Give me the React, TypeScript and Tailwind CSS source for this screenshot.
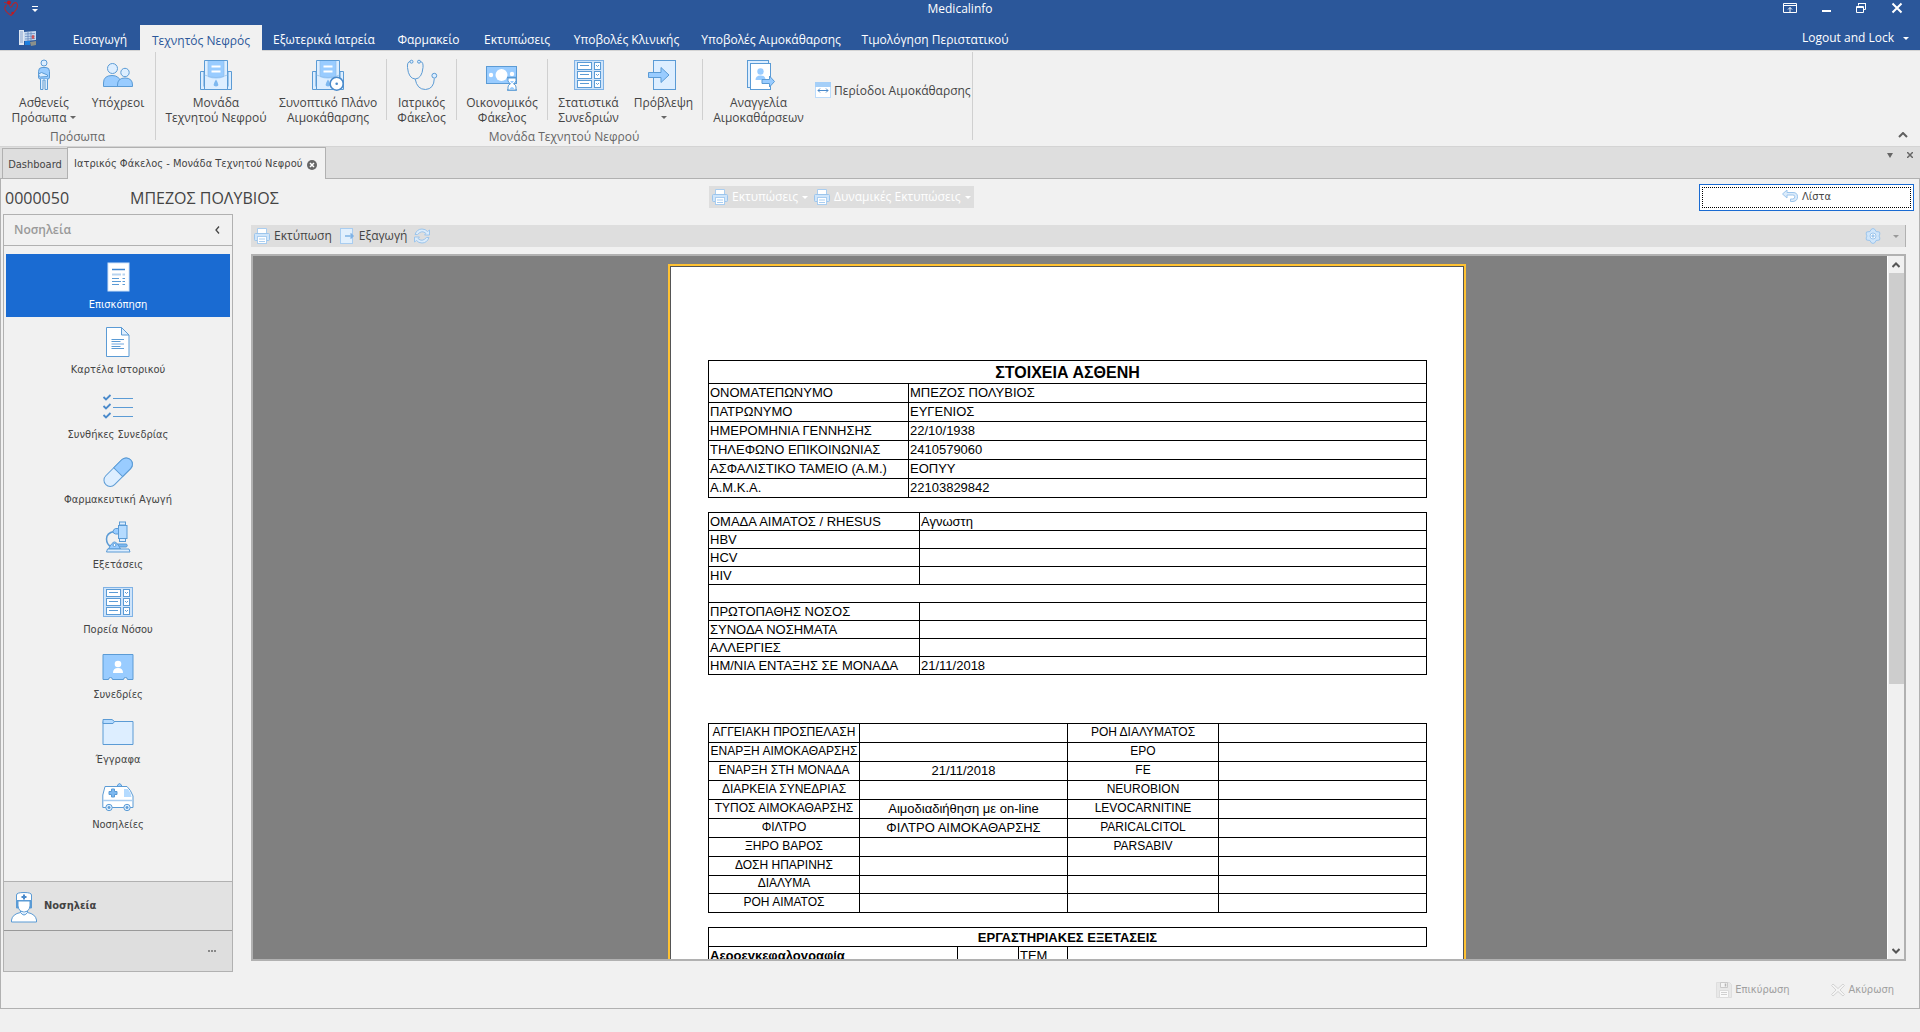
import type { ReactNode } from "react";

const LINE = "#5b9bd5";
const MID = "#99ccff";
const PALE = "#ddeeff";

type IconProps = { className?: string };

const Svg = ({ children, size = 32, className = "" }: { children: ReactNode; size?: number; className?: string }) => (
  <svg
    width={size}
    height={size}
    viewBox={`0 0 ${size} ${size}`}
    fill="none"
    stroke={LINE}
    strokeWidth="1"
    className={`shrink-0 ${className}`}
    aria-hidden="true"
  >
    {children}
  </svg>
);

const PatientIcon = () => (
  <Svg>
    <circle cx="16" cy="4" r="3" fill={PALE} />
    <path d="M10.500 18v-5.500q0-4 3.500-4h4q3.500 0 3.500 4V18q0 2-1.500 2h-8q-1.500 0-1.500-2z" fill={MID} />
    <path d="M12.500 20v10.500h2.500V21h2v9.500h2.500V20" fill={PALE} />
    <path d="M10.500 15l3-1.500 6 2.500v1.500l-7 .5q-2-1-2-3z" fill={PALE} />
  </Svg>
);

const PeopleIcon = () => (
  <Svg>
    <circle cx="10.500" cy="9.500" r="5" fill={PALE} />
    <path d="M1.500 27.500V24q0-7.500 8.500-7.500 7 0 8.500 6v5z" fill={MID} />
    <circle cx="23" cy="13.500" r="4.200" fill={PALE} />
    <path d="M15.500 27.500V26q0-7 7.500-7t7.500 7v1.500z" fill={MID} />
  </Svg>
);

const MachineBase = () => (
  <>
    <path d="M.5 12.500H4v15h24v-15h3.500v18H.5z" fill={PALE} />
    <path d="M4.500 30.500V1.500h23v29z" fill={PALE} />
    <path d="M8 2h16v16q-8 3-16 0z" fill={MID} stroke="none" />
    <path d="M4.500 16q11.500 5 23 0M8 2v14.500M24 2v14.500" strokeWidth=".7" stroke="#8fbbe6" />
    <path d="M11.500 7.500h9M11.500 12.500h9" stroke="#fff" strokeWidth="2" />
    <path d="M16 20.500q4.500 6.500 0 7-4.500-.5 0-7z" fill="#7db8f0" stroke="none" />
  </>
);

const MachineIcon = () => (
  <Svg>
    <MachineBase />
  </Svg>
);

const MachinePlanIcon = () => (
  <Svg>
    <MachineBase />
    <circle cx="24.700" cy="24.700" r="6.500" fill="#fff" stroke="#4a8acb" strokeWidth="1.500" />
    <circle cx="24.700" cy="24.700" r="1.300" fill="#4a8acb" stroke="none" />
  </Svg>
);

const StethoscopeIcon = () => (
  <Svg>
    <circle cx="5.500" cy="2.700" r="1.500" fill={PALE} />
    <circle cx="13" cy="2.700" r="1.500" fill={PALE} />
    <path d="M4 2.500Q1 3 1.500 8.500 2.500 19.500 9.200 20 16 19.500 17 8.500 17.500 3 14.500 2.500" />
    <path d="M9.200 20Q11 30.500 19.500 30.500 28 30 28.300 19.500" />
    <circle cx="28.300" cy="16.700" r="2.400" fill={PALE} />
  </Svg>
);

const MoneyIcon = () => (
  <Svg>
    <rect x=".5" y="7.500" width="30" height="17" fill={MID} />
    <circle cx="15.500" cy="16" r="6" fill="#fff" stroke="none" />
    <circle cx="5" cy="16" r="2.200" fill="#fff" stroke="none" />
    <circle cx="26" cy="15" r="2.200" fill="#fff" stroke="none" />
    <path d="M21 18.500h10M21 31h10" strokeWidth="1.500" />
    <path d="M22 19v2.500q0 2 2.500 3.200-2.500 1.300-2.500 3.300v3h8v-3q0-2-2.500-3.300 2.500-1.200 2.500-3.200V19z" fill="#fff" />
    <path d="M24 22h4l-2 2.500zM23.500 30q2.500-4 5 0z" fill={MID} stroke="none" />
  </Svg>
);

const FormListIcon = () => (
  <Svg>
    <rect x="1.500" y="1.500" width="29" height="29" fill="#cfe4fa" stroke="#7fb2e5" />
    {[3, 12, 21].map((y) => (
      <g key={y}>
        <rect x="4.500" y={y + 0.5} width="14" height="7" fill="#fff" />
        <path d={`M7 ${y + 3.5}h9`} />
        <rect x="21.500" y={y + 0.5} width="6" height="7" fill="#fff" />
        <path d={`M23 ${y + 3}l1.500 1.500 1.500-1.500`} />
      </g>
    ))}
  </Svg>
);

const ForecastIcon = () => (
  <Svg>
    <rect x="5.500" y="1.500" width="22" height="29" fill={PALE} />
    <path d="M.5 13.500h12.500V8.500l8 7.500-8 7.500V18.500H.5z" fill={MID} />
  </Svg>
);

const AnnounceIcon = () => (
  <Svg>
    <rect x="4.500" y="1.500" width="21" height="27" fill={PALE} />
    <rect x="7.500" y="4.500" width="20" height="26" fill="#fff" />
    <circle cx="17.500" cy="12.500" r="3.200" fill={MID} stroke="none" />
    <path d="M12.500 21q0-4.500 5-4.500t5 4.500z" fill={MID} stroke="none" />
    <path d="M19 20.500h7.500V17l5 5.500-5 5.500v-3.500H19z" fill={MID} />
  </Svg>
);

const PeriodIcon = () => (
  <Svg size={16}>
    <rect x=".5" y=".5" width="15" height="15" fill="#fff" stroke="#bcdcfb" />
    <path d="M0 0h16v5H0z" fill="#a5cff8" stroke="none" />
    <path d="M3 8.500h10M5 6.500l-2 2 2 2M11 6.500l2 2-2 2" stroke="#4a8acb" />
  </Svg>
);

const PrinterIcon = () => (
  <Svg size={16}>
    <path d="M3.500 5V.5h9V5" fill="#fff" stroke="#a9cdf0" />
    <rect x=".5" y="5.500" width="15" height="7" rx="1" fill="#cfe5fa" stroke="#9cc5ec" />
    <rect x="3.500" y="8.500" width="9" height="7" fill="#fff" stroke="#a9cdf0" />
    <path d="M5 11h6M5 13.500h6" stroke="#a9cdf0" />
  </Svg>
);

const ExportIcon = () => (
  <Svg size={16}>
    <rect x="1.500" y=".5" width="12" height="15" fill="#e2f0fd" stroke="#a9cdf0" />
    <path d="M6 8h8M11.500 5.500L14 8l-2.500 2.500" stroke="#7fb2e5" strokeWidth="1.500" />
  </Svg>
);

const RefreshIcon = () => (
  <Svg size={16}>
    <path d="M1 6.500Q3 1 8 1q3.500 0 5.500 2.500L15.500 2v5h-5l1.500-1.500Q8 1.500 3.500 6.500z" fill="#dcecfb" stroke="#9cc5ec" />
    <path d="M15 9.500Q13 15 8 15q-3.500 0-5.500-2.500L.5 14V9h5L4 10.500q4 4 8.500-1z" fill="#dcecfb" stroke="#9cc5ec" />
  </Svg>
);

const GearIcon = () => (
  <Svg size={16}>
    <path d="M6 1.500q2-2 4 0l1 2 3.500.5q1 2-.5 4 1.500 2 .5 4l-3.500.5-1 2q-2 2-4 0l-1-2-3.500-.5q-1-2 .5-4-1.500-2-.5-4L5 3.500z" fill="#cfe5fa" stroke="#9cc5ec" />
    <circle cx="8" cy="8" r="3" fill="#fff" stroke="#9cc5ec" />
    <circle cx="8" cy="8" r="1.200" fill="#a9cdf0" stroke="#9cc5ec" />
  </Svg>
);

const BackIcon = () => (
  <Svg size={16}>
    <path d="M.5 5L5 1v2.500h6q4.500 0 4.500 4.300T11 12.500H8.500V10h2.300q2-.2 2-2.200T10.800 6H5v3z" fill="#dcecfb" stroke="#9cc5ec" />
  </Svg>
);

const SaveIcon = () => (
  <Svg size={16}>
    <path d="M.5.500h13l2 2v13H.5z" fill="#e8e8e8" stroke="#dedede" />
    <path d="M4.500.500h7v5h-7z" fill="#f4f4f4" stroke="#c9c9c9" />
    <path d="M9.500 1.500v3" stroke="#b5b5b5" strokeWidth="1.500" />
    <path d="M3.500 8.500h9v7h-9z" fill="#fafafa" stroke="#dcdcdc" />
    <path d="M5 10.500h6M5 12.500h6" stroke="#d0d0d0" />
  </Svg>
);

const CancelIcon = () => (
  <Svg size={16}>
    <path d="M3 2l5 4.500L13 2l1.500 1.500L10 8l4.500 4.500L13 14 8 9.500 3 14l-1.500-1.500L6 8 1.500 3.500z" fill="#f4f4f4" stroke="#d4d4d4" />
  </Svg>
);

const ReportIcon = () => (
  <Svg>
    <rect x="6" y="2" width="21" height="28" fill="#fff" stroke="#cfe4fa" />
    <path d="M10 8.500h13" stroke="#3f86d0" strokeWidth="1.500" />
    <path d="M10 13.500h9M20.500 13.500h2.500" stroke="#b7d3ef" strokeWidth="2" />
    <path d="M10 17.500h7M20.500 17.500h2.500M10 20.500h9M20.500 20.500h2.500M10 23.500h7M20.500 23.500h2.500" />
  </Svg>
);

const HistoryCardIcon = () => (
  <Svg>
    <path d="M4.500 1.500h15l7.500 7.500v21.500H4.500z" fill="#fff" />
    <path d="M19.500 1.500V9H27z" fill={PALE} />
    <path d="M9.500 13.500H22M9.500 15.500h9M9.500 20.500h9M9.500 22.500H22" />
    <path d="M9.500 18H22" stroke="#b7d3ef" strokeWidth="2" />
  </Svg>
);

const ChecklistIcon = () => (
  <Svg>
    {[7, 16, 25].map((y) => (
      <g key={y}>
        <path d={`M1.500 ${y - 1}l2.500 2.500 4.500-4.500`} stroke="#4a8acb" strokeWidth="1.800" />
        <path d={`M11 ${y + 0.5}h20`} />
      </g>
    ))}
  </Svg>
);

const PillIcon = () => (
  <Svg>
    <g transform="rotate(45 16 16)">
      <rect x="10" y="-1.500" width="12.500" height="35" rx="6.200" fill={PALE} />
      <path d="M10 16V4.700a6.200 6.200 0 0 1 12.500 0V16z" fill={MID} />
    </g>
  </Svg>
);

const MicroscopeIcon = () => (
  <Svg>
    <path d="M12 10.500Q4.500 12 4.500 18q0 5 4.500 8" strokeWidth="1.500" />
    <rect x="17.500" y="1" width="6" height="3" fill={PALE} />
    <rect x="17.500" y="17.500" width="6" height="3" fill={PALE} />
    <rect x="16.500" y="4.500" width="8.500" height="13" fill="#b5dbff" />
    <path d="M16.500 7.500h-3q-2.500 1-2.500 3 0 2 2.500 2.500h3z" fill={MID} />
    <path d="M14 23h10.500q1.500 1.500 0 3H12z" fill="#7db8f0" />
    <path d="M6.500 28q3.500-7 6-7t6 7z" fill={MID} />
    <circle cx="12.500" cy="24" r="1.500" fill="#fff" />
    <path d="M4.500 31l1-3h21.500l1 3z" fill={PALE} />
  </Svg>
);

const SessionIcon = () => (
  <Svg>
    <path d="M1 3.500h30v25h-5.500a2 2 0 0 0-4 0h-11a2 2 0 0 0-4 0H1z" fill={MID} />
    <circle cx="16" cy="13" r="3.300" fill="#fff" stroke="none" />
    <path d="M11 22q0-5 5-5t5 5z" fill="#fff" stroke="none" />
  </Svg>
);

const FolderIcon = () => (
  <Svg>
    <path d="M1 28.500V5.500h30v23z" fill={PALE} />
    <path d="M1 7V3.500h9L12.500 5.500 11 7.500H1z" fill="#b5dbff" />
  </Svg>
);

const AmbulanceIcon = () => (
  <Svg>
    <path d="M15.500 5.500V4q2-3 4 0v1.500z" fill={MID} />
    <path d="M.8 26.500V14L3 5.500h22q3.500 3 6 9.500v11.500z" fill="#fff" />
    <path d="M22 8h4q3 3.500 3.500 8H22z" fill="#b5dbff" stroke="none" />
    <path d="M1 19.500h30" stroke="#a9cdf0" strokeWidth="1.500" />
    <path d="M9.500 8h3v2.500H15v3h-2.500V16h-3v-2.500H7v-3h2.500z" fill="#7db8f0" />
    <circle cx="7" cy="26.500" r="3.200" fill={PALE} />
    <circle cx="25" cy="26.500" r="3.200" fill={PALE} />
    <circle cx="7" cy="26.500" r="1" fill={LINE} />
    <circle cx="25" cy="26.500" r="1" fill={LINE} />
  </Svg>
);

const NurseIcon = () => (
  <Svg>
    <path d="M8.500 9h15v8h-15z" fill="#5b9bd5" />
    <path d="M10 10h12v5q-1 6-6 6.500-5-.5-6-6.500z" fill="#fff" />
    <path d="M8.500 9.500V4Q8.500 1.500 16 1.500T23.500 4v5.500z" fill="#fff" />
    <path d="M16 3.500v5M13.500 6h5" stroke="#4a8acb" strokeWidth="2" />
    <path d="M3.500 31v-2q1-6 9-7.500V20q3.500 2.500 7 0v1.500q8 1.500 9 7.500v2z" fill="#fff" />
    <path d="M12.500 21.500q3.500 5 7 0" fill={PALE} />
  </Svg>
);

const HeartLogo = () => (
  <svg width="16" height="16" viewBox="0 0 16 16" fill="none" stroke="#b3262e" aria-hidden="true">
    <path d="M3.500 5Q-1.500 9 8 15.500 17 7 13.500 3 11 1.500 8.500 7" strokeWidth="1.100" />
    <path d="M1 2.500Q5 2 8 8" strokeWidth=".9" />
    <circle cx="6" cy="2.500" r="2" fill="#c4161c" stroke="none" />
    <circle cx="9.500" cy="13" r="1.200" fill="#c4161c" stroke="none" />
  </svg>
);

const AppIcon = () => (
  <svg width="18" height="16" viewBox="0 0 18 16" aria-hidden="true">
    <path d="M0 0h5v15H0z" fill="#dfe7f2" />
    <path d="M1 2h3M1 4h3M1 6h3M1 8h3M1 10h3M1 12h3" stroke="#6f93c4" strokeWidth=".8" />
    <path d="M5 2l12-1v9L5 11z" fill="#c6d9f0" />
    <path d="M6 4l10-.5M6 6.500l10-.5M6 9l10-.5M9 2v9M12 2v8.500" stroke="#5a7fb8" strokeWidth=".7" />
    <path d="M14 5v4M12.500 7h3" stroke="#d83b3b" strokeWidth="1.200" />
    <path d="M6 11h5v4H6z" fill="#1c7fe0" />
    <path d="M11 12l6-1v4l-5 1z" fill="#8b8f8a" />
  </svg>
);

const Caret = ({ className = "text-[#666666]" }: IconProps) => (
  <svg width="6" height="3" viewBox="0 0 6 3" className={`shrink-0 ${className}`} aria-hidden="true">
    <path d="M0 0h6L3 3z" fill="currentColor" />
  </svg>
);

const Chevron = ({ className = "" }: IconProps) => (
  <svg width="10" height="6" viewBox="0 0 10 6" className={className} fill="none" stroke="#606060" strokeWidth="2" aria-hidden="true">
    <path d="M1 5l4-4 4 4" />
  </svg>
);

const menuTabs = [
  { label: "Εισαγωγή", width: "w-[80px]" },
  { label: "Τεχνητός Νεφρός", width: "w-[122px]", active: true },
  { label: "Εξωτερικά Ιατρεία", width: "w-[124px]" },
  { label: "Φαρμακείο", width: "w-[85px]" },
  { label: "Εκτυπώσεις", width: "w-[92px]" },
  { label: "Υποβολές Κλινικής", width: "w-[127px]" },
  { label: "Υποβολές Αιμοκάθαρσης", width: "w-[162px]" },
  { label: "Τιμολόγηση Περιστατικού", width: "w-[166px]" }
];

const navItems = [
  { label: "Επισκόπηση", icon: <ReportIcon />, active: true },
  { label: "Καρτέλα Ιστορικού", icon: <HistoryCardIcon /> },
  { label: "Συνθήκες Συνεδρίας", icon: <ChecklistIcon /> },
  { label: "Φαρμακευτική Αγωγή", icon: <PillIcon /> },
  { label: "Εξετάσεις", icon: <MicroscopeIcon /> },
  { label: "Πορεία Νόσου", icon: <FormListIcon /> },
  { label: "Συνεδρίες", icon: <SessionIcon /> },
  { label: "Έγγραφα", icon: <FolderIcon /> },
  { label: "Νοσηλείες", icon: <AmbulanceIcon /> }
];

const patientRows = [
  ["ΟΝΟΜΑΤΕΠΩΝΥΜΟ", "ΜΠΕΖΟΣ ΠΟΛΥΒΙΟΣ"],
  ["ΠΑΤΡΩΝΥΜΟ", "ΕΥΓΕΝΙΟΣ"],
  ["ΗΜΕΡΟΜΗΝΙΑ ΓΕΝΝΗΣΗΣ", "22/10/1938"],
  ["ΤΗΛΕΦΩΝΟ ΕΠΙΚΟΙΝΩΝΙΑΣ", "2410579060"],
  ["ΑΣΦΑΛΙΣΤΙΚΟ ΤΑΜΕΙΟ (Α.Μ.)", "ΕΟΠΥΥ"],
  ["Α.Μ.Κ.Α.", "22103829842"]
];

const clinicalRows = [
  ["ΟΜΑΔΑ ΑΙΜΑΤΟΣ / RHESUS", "Αγνωστη"],
  ["HBV", ""],
  ["HCV", ""],
  ["HIV", ""],
  null,
  ["ΠΡΩΤΟΠΑΘΗΣ ΝΟΣΟΣ", ""],
  ["ΣΥΝΟΔΑ ΝΟΣΗΜΑΤΑ", ""],
  ["ΑΛΛΕΡΓΙΕΣ", ""],
  ["ΗΜ/ΝΙΑ ΕΝΤΑΞΗΣ ΣΕ ΜΟΝΑΔΑ", "21/11/2018"]
];

const dialysisRows = [
  ["ΑΓΓΕΙΑΚΗ ΠΡΟΣΠΕΛΑΣΗ", "", "ΡΟΗ ΔΙΑΛΥΜΑΤΟΣ"],
  ["ΕΝΑΡΞΗ ΑΙΜΟΚΑΘΑΡΣΗΣ", "", "EPO"],
  ["ΕΝΑΡΞΗ ΣΤΗ ΜΟΝΑΔΑ", "21/11/2018", "FE"],
  ["ΔΙΑΡΚΕΙΑ ΣΥΝΕΔΡΙΑΣ", "", "NEUROBION"],
  ["ΤΥΠΟΣ ΑΙΜΟΚΑΘΑΡΣΗΣ", "Αιμοδιαδιήθηση με on-line", "LEVOCARNITINE"],
  ["ΦΙΛΤΡΟ", "ΦΙΛΤΡΟ ΑΙΜΟΚΑΘΑΡΣΗΣ", "PARICALCITOL"],
  ["ΞΗΡΟ ΒΑΡΟΣ", "", "PARSABIV"],
  ["ΔΟΣΗ ΗΠΑΡΙΝΗΣ", "", ""],
  ["ΔΙΑΛΥΜΑ", "", ""],
  ["ΡΟΗ ΑΙΜΑΤΟΣ", "", ""]
];

const RibbonButton = ({
  icon,
  lines,
  width,
  menu = false
}: {
  icon: ReactNode;
  lines: string[];
  width: string;
  menu?: boolean;
}) => (
  <button type="button" className={`flex shrink-0 flex-col items-center pt-2 ${width}`}>
    {icon}
    <span className="mt-1 block whitespace-nowrap">{lines[0]}</span>
    <span className="flex h-[15px] items-center justify-center gap-1 whitespace-nowrap">
      {lines[1]}
      {menu ? <Caret /> : null}
    </span>
  </button>
);

const RibbonDivider = () => <div className="mx-[2px] mt-2 h-[61px] w-px shrink-0 bg-[#d0d0d0]" />;

const TitleBar = () => (
  <header className="bg-[#2b579a] text-white">
    <div className="grid h-[25px] grid-cols-[1fr_auto_1fr] items-start">
      <div className="flex items-start gap-3 pl-[3px]">
        <HeartLogo />
        <button type="button" aria-label="Γρήγορη πρόσβαση" className="mt-[3px] flex h-3 w-[8px] items-center justify-center">
          <svg width="6" height="6" viewBox="0 0 6 6" aria-hidden="true">
            <path d="M0 .5h6" stroke="#fff" />
            <path d="M0 3h6L3 6z" fill="#fff" />
          </svg>
        </button>
      </div>
      <h1 className="pt-px text-[12px] leading-4">Medicalinfo</h1>
      <div className="flex justify-end gap-[22px] pt-[2px] pr-[17px]">
        <button type="button" aria-label="Ribbon" className="mr-[2px]">
          <svg width="14" height="12" viewBox="0 0 14 12" fill="none" stroke="#fff" aria-hidden="true">
            <path d="M.5 1.500h13v9H.5zM.5 3.500h13M7 10V5.500M5 7.500l2-2 2 2" />
          </svg>
        </button>
        <button type="button" aria-label="Ελαχιστοποίηση">
          <svg width="12" height="12" viewBox="0 0 12 12" aria-hidden="true">
            <path d="M1 9h9" stroke="#fff" strokeWidth="2" />
          </svg>
        </button>
        <button type="button" aria-label="Επαναφορά">
          <svg width="12" height="12" viewBox="0 0 12 12" fill="none" stroke="#fff" aria-hidden="true">
            <path d="M3.500 3.500v-2h7v6h-2M3 1.500h8M1.500 4.500h7v6h-7zM1 5.500h8" />
          </svg>
        </button>
        <button type="button" aria-label="Κλείσιμο" className="ml-[2px]">
          <svg width="12" height="12" viewBox="0 0 12 12" fill="none" stroke="#fff" strokeWidth="2" aria-hidden="true">
            <path d="M1.500 1.500l9 9M10.500 1.500l-9 9" />
          </svg>
        </button>
      </div>
    </div>
    <nav className="flex h-[25px] text-[12px]">
      <button type="button" aria-label="Εφαρμογή" className="flex w-[60px] items-center pl-[19px]">
        <AppIcon />
      </button>
      {menuTabs.map((t) => (
        <button
          key={t.label}
          type="button"
          className={`shrink-0 whitespace-nowrap pt-[5px] ${t.width} ${
            t.active ? "relative z-10 -mb-px bg-[#f1f1f1] text-[#2b579a]" : ""
          }`}
        >
          {t.label}
        </button>
      ))}
      <button type="button" className="ml-auto flex items-center gap-[9px] pr-[11px] pt-px">
        Logout and Lock
        <Caret className="text-white" />
      </button>
    </nav>
  </header>
);

const Ribbon = () => (
  <div className="flex h-[97px] shrink-0 border-y border-[#d4d4d4] bg-[#f1f1f1] text-[12px] leading-[15px] text-[#444444]">
    <section className="flex">
      <div className="flex flex-col">
        <div className="flex h-[78px] pr-[7px]">
          <RibbonButton icon={<PatientIcon />} lines={["Ασθενείς", "Πρόσωπα"]} width="w-[88px]" menu />
          <RibbonButton icon={<PeopleIcon />} lines={["Υπόχρεοι"]} width="w-[60px]" />
        </div>
        <h2 className="text-center text-[#666666]">Πρόσωπα</h2>
      </div>
      <div className="mt-px h-[88px] w-px bg-[#d0d0d0]" />
    </section>
    <section className="flex">
      <div className="flex flex-col">
        <div className="flex h-[78px] pl-1">
          <RibbonButton icon={<MachineIcon />} lines={["Μονάδα", "Τεχνητού Νεφρού"]} width="w-[112px]" />
          <RibbonButton icon={<MachinePlanIcon />} lines={["Συνοπτικό Πλάνο", "Αιμοκάθαρσης"]} width="w-[112px]" />
          <RibbonDivider />
          <RibbonButton icon={<StethoscopeIcon />} lines={["Ιατρικός", "Φάκελος"]} width="w-[65px]" />
          <RibbonDivider />
          <RibbonButton icon={<MoneyIcon />} lines={["Οικονομικός", "Φάκελος"]} width="w-[86px]" />
          <RibbonDivider />
          <RibbonButton icon={<FormListIcon />} lines={["Στατιστικά", "Συνεδριών"]} width="w-[77px]" />
          <RibbonButton icon={<ForecastIcon />} lines={["Πρόβλεψη"]} width="w-[73px]" menu />
          <RibbonDivider />
          <RibbonButton icon={<AnnounceIcon />} lines={["Αναγγελία", "Αιμοκαθάρσεων"]} width="w-[107px]" />
          <button type="button" className="flex w-[160px] shrink-0 items-center gap-[3px] whitespace-nowrap pl-[3px]">
            <PeriodIcon />
            Περίοδοι Αιμοκάθαρσης
          </button>
        </div>
        <h2 className="text-center text-[#666666]">Μονάδα Τεχνητού Νεφρού</h2>
      </div>
      <div className="mt-px h-[88px] w-px bg-[#d0d0d0]" />
    </section>
    <button type="button" aria-label="Σύμπτυξη" className="mt-auto ml-auto mr-3 mb-2">
      <Chevron />
    </button>
  </div>
);

const DocumentTabs = () => (
  <div className="flex h-8 shrink-0 items-end border-b border-[#b1b1b1] bg-[#dedede] pl-[2px] font-['DejaVu_Sans_Condensed','Noto_Sans',sans-serif] text-[11px] text-[#444444]">
    <button type="button" className="h-[30px] w-[66px] border border-b-0 border-[#b1b1b1] pt-1">
      Dashboard
    </button>
    <div className="relative -mb-px -ml-px flex h-8 w-[259px] items-center justify-between border border-b-0 border-[#b1b1b1] bg-[#f1f1f1] pt-[2px] pr-2 pl-[6px]">
      <span className="whitespace-nowrap">Ιατρικός Φάκελος - Μονάδα Τεχνητού Νεφρού</span>
      <button type="button" aria-label="Κλείσιμο καρτέλας">
        <svg width="10" height="10" viewBox="0 0 10 10" aria-hidden="true">
          <circle cx="5" cy="5" r="5" fill="#666666" />
          <path d="M3 3l4 4M7 3L3 7" stroke="#fff" strokeWidth="1.500" />
        </svg>
      </button>
    </div>
    <div className="mb-5 ml-auto flex items-center gap-[14px] pr-[7px]">
      <button type="button" aria-label="Λίστα καρτελών">
        <svg width="6" height="5" viewBox="0 0 6 5" aria-hidden="true">
          <path d="M0 0h6L3 5z" fill="#666666" />
        </svg>
      </button>
      <button type="button" aria-label="Κλείσιμο όλων">
        <svg width="6" height="6" viewBox="0 0 6 6" stroke="#666666" strokeWidth="1.500" aria-hidden="true">
          <path d="M0 0l6 6M6 0L0 6" />
        </svg>
      </button>
    </div>
  </div>
);

const PatientHeader = () => (
  <div className="flex h-[34px] shrink-0 items-center pr-[5px] text-[#444444]">
    <div className="flex w-[708px] shrink-0 pt-px pl-1 text-[16px]">
      <span className="w-[125px]">0000050</span>
      <span>ΜΠΕΖΟΣ ΠΟΛΥΒΙΟΣ</span>
    </div>
    <div className="flex h-[22px] w-[265px] shrink-0 items-center gap-[6px] bg-[#dedede] pl-[3px] text-[12px] text-white">
      <button type="button" className="flex items-center gap-1 whitespace-nowrap">
        <PrinterIcon />
        Εκτυπώσεις
        <Caret className="text-white" />
      </button>
      <button type="button" className="flex items-center gap-1 whitespace-nowrap">
        <PrinterIcon />
        Δυναμικές Εκτυπώσεις
        <Caret className="text-white" />
      </button>
    </div>
    <button
      type="button"
      className="ml-auto h-[27px] w-[215px] border border-[#1a6bd2] bg-white p-[2px] font-['DejaVu_Sans_Condensed','Noto_Sans',sans-serif] text-[11px]"
    >
      <span className="flex h-full items-center justify-center gap-1 border border-dotted border-black">
        <BackIcon />
        Λίστα
      </span>
    </button>
  </div>
);

const Sidebar = () => (
  <aside className="flex w-[230px] shrink-0 flex-col border border-[#b1b1b1] font-['DejaVu_Sans_Condensed','Noto_Sans',sans-serif] text-[11px] text-[#444444]">
    <div className="flex h-[31px] shrink-0 items-center justify-between border-b border-[#b1b1b1] pr-3 pl-[10px]">
      <h2 className="font-['Open_Sans','Noto_Sans',sans-serif] text-[12px] font-semibold text-[#999999]">Νοσηλεία</h2>
      <button type="button" aria-label="Σύμπτυξη μενού">
        <svg width="5" height="8" viewBox="0 0 5 8" fill="none" stroke="#444444" strokeWidth="1.300" aria-hidden="true">
          <path d="M4 .5L1 4l3 3.500" />
        </svg>
      </button>
    </div>
    <nav className="flex flex-1 flex-col gap-[2px] px-[2px] pt-2">
      {navItems.map((n) => (
        <button
          key={n.label}
          type="button"
          className={`flex h-[63px] shrink-0 flex-col items-center pt-[7px] ${n.active ? "bg-[#1a6bd2] text-white" : ""}`}
        >
          {n.icon}
          <span className="mt-1 leading-4">{n.label}</span>
        </button>
      ))}
    </nav>
    <button
      type="button"
      className="flex h-[50px] shrink-0 items-center gap-1 border-t border-b border-t-[#b1b1b1] border-b-[#999999] bg-[#e2e2e2] pt-px pl-1 font-bold"
    >
      <NurseIcon />
      Νοσηλεία
    </button>
    <div className="flex h-10 shrink-0 items-center justify-end bg-[#dedede] pr-4">
      <button type="button" aria-label="Περισσότερα" className="flex gap-px">
        <span className="size-[2px] bg-[#888888]" />
        <span className="size-[2px] bg-[#888888]" />
        <span className="size-[2px] bg-[#888888]" />
      </button>
    </div>
  </aside>
);

const cell = "whitespace-nowrap border border-black p-0";
const tallCell = "whitespace-nowrap border border-black p-0 pb-[2px]";

const ReportPage = () => (
  <article className="h-[1128px] w-[798px] shrink-0 border-2 border-[#ffc233] font-['Liberation_Sans',Arial,sans-serif] text-[13px] leading-[15px] text-black">
    <div className="h-full border border-[#555555] bg-white pt-[93px] pr-9 pl-[37px]">
      <table className="w-full table-fixed border-collapse">
        <colgroup>
          <col className="w-[200px]" />
          <col />
        </colgroup>
        <thead>
          <tr className="h-[23px]">
            <th colSpan={2} className={`${cell} text-[16px] font-bold`}>
              ΣΤΟΙΧΕΙΑ ΑΣΘΕΝΗ
            </th>
          </tr>
        </thead>
        <tbody>
          {patientRows.map(([label, value]) => (
            <tr key={label} className="h-[19px]">
              <th scope="row" className={`${tallCell} pl-px text-left font-normal`}>
                {label}
              </th>
              <td className={`${tallCell} pl-px`}>{value}</td>
            </tr>
          ))}
        </tbody>
      </table>

      <table className="mt-[14px] w-full table-fixed border-collapse">
        <colgroup>
          <col className="w-[211px]" />
          <col />
        </colgroup>
        <tbody>
          {clinicalRows.map((row, i) =>
            row ? (
              <tr key={i} className="h-[18px]">
                <th scope="row" className={`${cell} pl-px text-left font-normal`}>
                  {row[0]}
                </th>
                <td className={`${cell} pl-px`}>{row[1]}</td>
              </tr>
            ) : (
              <tr key={i} className="h-[18px]">
                <td colSpan={2} className={cell} />
              </tr>
            )
          )}
        </tbody>
      </table>

      <table className="mt-12 w-full table-fixed border-collapse text-center">
        <colgroup>
          <col className="w-[151px]" />
          <col className="w-[208px]" />
          <col className="w-[151px]" />
          <col />
        </colgroup>
        <tbody>
          {dialysisRows.map(([label, value, drug]) => (
            <tr key={label} className={label === "ΔΙΑΛΥΜΑ" ? "h-[18px]" : "h-[19px]"}>
              <th scope="row" className={`${tallCell} text-[12px] font-normal`}>
                {label}
              </th>
              <td className={tallCell}>{value}</td>
              <th className={`${tallCell} text-[12px] font-normal`}>{drug}</th>
              <td className={tallCell} />
            </tr>
          ))}
        </tbody>
      </table>

      <table className="mt-[14px] w-full table-fixed border-collapse">
        <colgroup>
          <col className="w-[249px]" />
          <col className="w-[61px]" />
          <col className="w-[49px]" />
          <col />
        </colgroup>
        <thead>
          <tr className="h-[19px]">
            <th colSpan={4} className={`${cell} font-bold`}>
              ΕΡΓΑΣΤΗΡΙΑΚΕΣ ΕΞΕΤΑΣΕΙΣ
            </th>
          </tr>
        </thead>
        <tbody>
          <tr className="h-[19px]">
            <th scope="row" className={`${tallCell} pl-px text-left font-bold`}>
              Αεροεγκεφαλογραφία
            </th>
            <td className={tallCell} />
            <td className={`${tallCell} pl-px`}>ΤΕΜ</td>
            <td className="border-l border-black" />
          </tr>
        </tbody>
      </table>
    </div>
  </article>
);

const Preview = () => (
  <main className="flex min-w-0 flex-1 flex-col pt-[11px] pr-[13px] pb-[11px] pl-[18px] text-[12px] text-[#444444]">
    <div className="flex h-[22px] shrink-0 items-center gap-[7px] border-r border-[#b1b1b1] bg-[#dedede] pl-[3px]">
      <button type="button" className="flex items-center gap-1">
        <PrinterIcon />
        Εκτύπωση
      </button>
      <button type="button" className="flex items-center gap-1">
        <ExportIcon />
        Εξαγωγή
      </button>
      <button type="button" aria-label="Ανανέωση">
        <RefreshIcon />
      </button>
      <button type="button" aria-label="Ρυθμίσεις" className="ml-auto flex items-center gap-3 pr-[6px]">
        <GearIcon />
        <Caret className="text-[#999999]" />
      </button>
    </div>
    <div className="mt-[7px] flex min-h-0 flex-1 border-2 border-[#b1b1b1] bg-[#808080]">
      <div className="flex min-w-0 flex-1 items-start justify-center overflow-hidden pt-2 pr-[6px]">
        <ReportPage />
      </div>
      <div className="flex w-[17px] shrink-0 flex-col items-center border-l border-white bg-[#f0f0f0]">
        <button type="button" aria-label="Κύλιση πάνω" className="flex h-[17px] items-center">
          <svg width="8" height="6" viewBox="0 0 8 6" fill="none" stroke="#555555" strokeWidth="2" aria-hidden="true">
            <path d="M.5 5L4 1.500 7.500 5" />
          </svg>
        </button>
        <div className="min-h-0 w-[15px] flex-[411] bg-[#cdcdcd]" />
        <div className="min-h-0 flex-[258]" />
        <button type="button" aria-label="Κύλιση κάτω" className="flex h-[17px] items-center">
          <svg width="8" height="6" viewBox="0 0 8 6" fill="none" stroke="#555555" strokeWidth="2" aria-hidden="true">
            <path d="M.5 1L4 4.500 7.500 1" />
          </svg>
        </button>
      </div>
    </div>
  </main>
);

export default function App() {
  return (
    <div className="flex h-screen flex-col overflow-hidden bg-[#f0f0f0] font-['Open_Sans','Noto_Sans',sans-serif]">
      <TitleBar />
      <Ribbon />
      <DocumentTabs />
      <div className="flex min-h-0 flex-1 flex-col border-x border-b border-[#b1b1b1] bg-[#f1f1f1] pt-px">
        <PatientHeader />
        <div className="flex min-h-0 flex-1 pl-[2px]">
          <Sidebar />
          <Preview />
        </div>
        <div className="flex h-9 shrink-0 items-start justify-end gap-10 pr-[25px] pt-[10px] font-['DejaVu_Sans_Condensed','Noto_Sans',sans-serif] text-[11px] leading-4 text-[#a0a0a0]">
          <button type="button" disabled className="flex items-center gap-[3px]">
            <SaveIcon />
            Επικύρωση
          </button>
          <button type="button" disabled className="flex items-center gap-[3px]">
            <CancelIcon />
            Ακύρωση
          </button>
        </div>
      </div>
      <footer className="h-[23px] shrink-0" />
    </div>
  );
}
